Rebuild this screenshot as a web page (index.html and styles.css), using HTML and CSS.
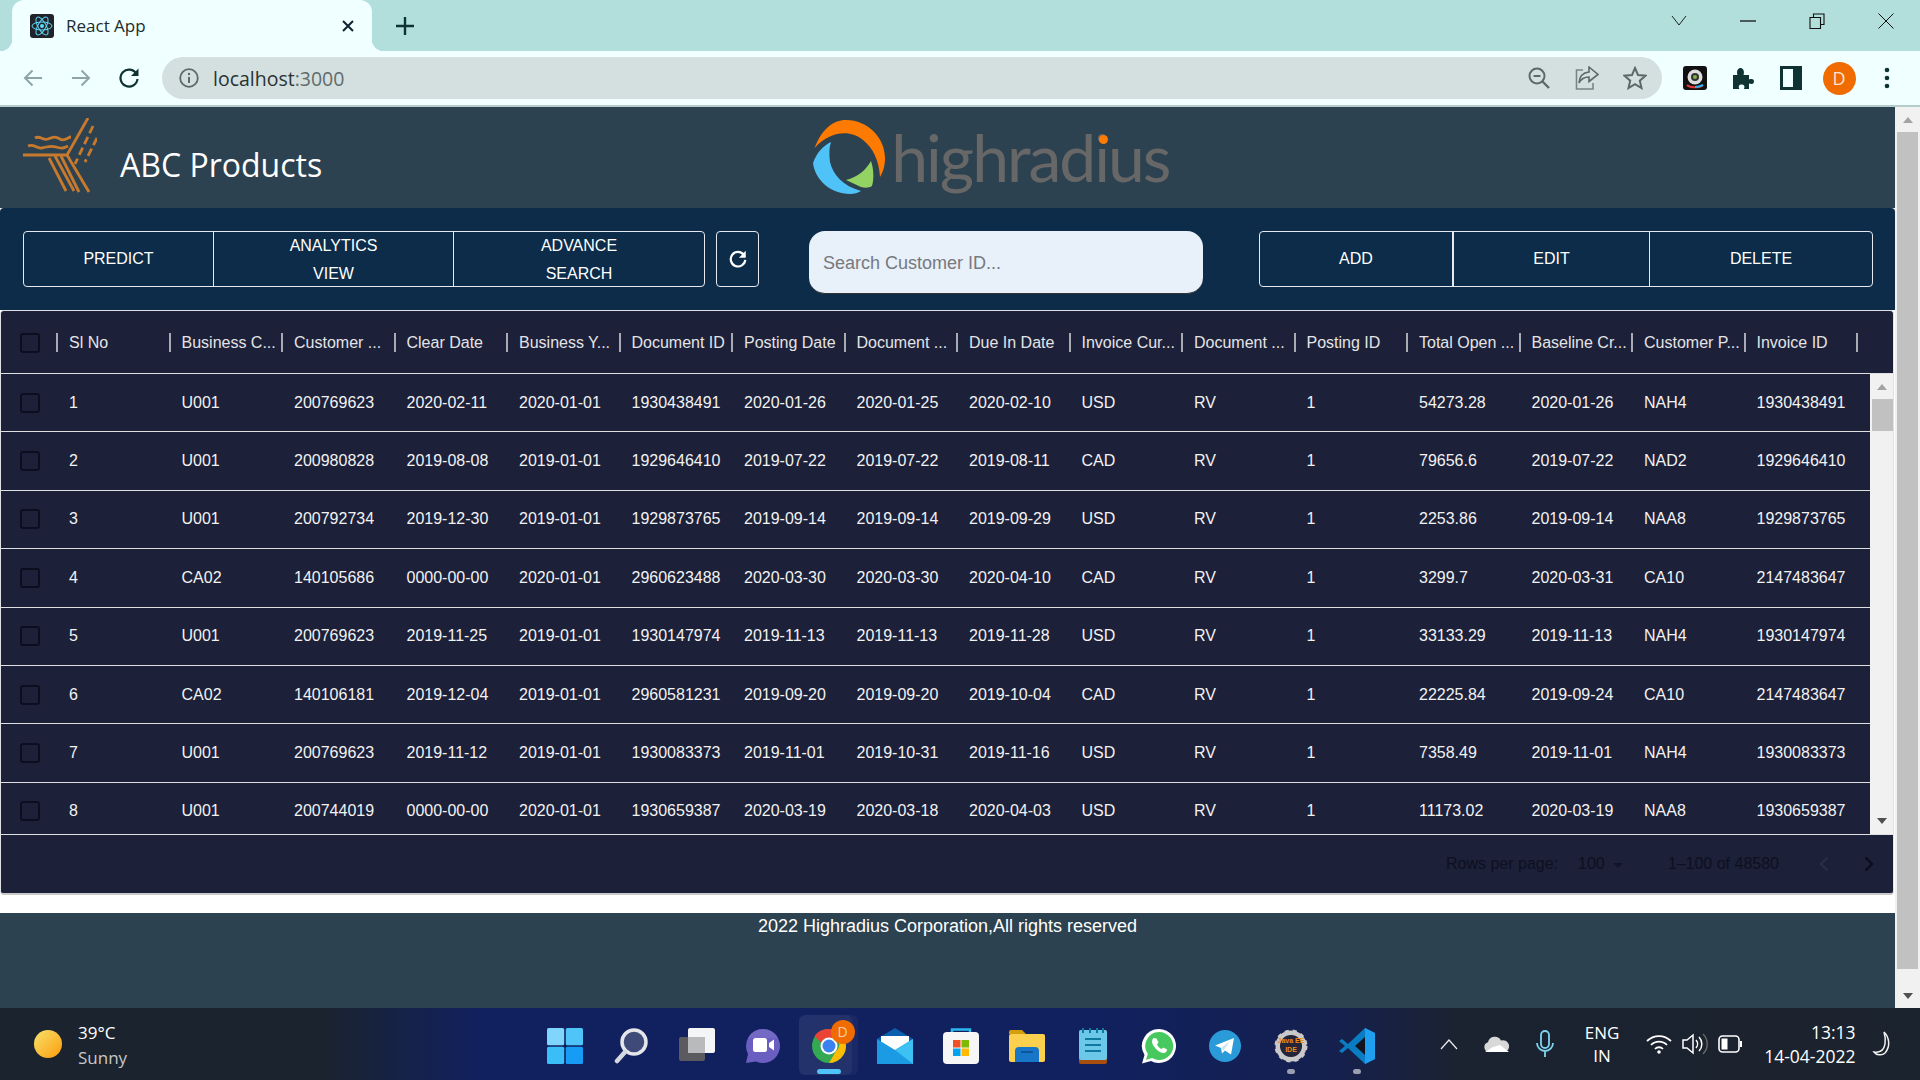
FILE: index.html
```html
<!DOCTYPE html>
<html lang="en">
<head>
  <meta charset="UTF-8">
  <title>React App</title>
  <link rel="stylesheet" href="styles.css">
</head>
<body>
  <!-- Browser tab strip -->
  <div class="tabstrip">
    <div class="tab">
      <svg class="favicon" viewBox="0 0 24 24" width="24" height="24">
        <rect width="24" height="24" rx="3" fill="#20232a"/>
        <g fill="none" stroke="#61dafb" stroke-width="1">
          <ellipse cx="12" cy="12" rx="10" ry="4"/>
          <ellipse cx="12" cy="12" rx="10" ry="4" transform="rotate(60 12 12)"/>
          <ellipse cx="12" cy="12" rx="10" ry="4" transform="rotate(120 12 12)"/>
        </g>
        <circle cx="12" cy="12" r="2" fill="#61dafb"/>
      </svg>
      <span class="tab-title">React App</span>
      <svg class="tab-close" viewBox="0 0 14 14" width="14" height="14"><path d="M2 2l10 10M12 2L2 12" stroke="#123" stroke-width="2"/></svg>
    </div>
    <svg class="new-tab" viewBox="0 0 20 20" width="20" height="20"><path d="M10 1v18M1 10h18" stroke="#0f3333" stroke-width="2.4"/></svg>
    <div class="win-controls">
      <div class="win-btn"><svg viewBox="0 0 16 12" width="16" height="12"><path d="M1 1l7 9 7-9" fill="none" stroke="#222" stroke-width="1"/></svg></div>
      <div class="win-btn"><svg viewBox="0 0 16 4" width="16" height="4"><path d="M0 2h16" stroke="#111" stroke-width="1.3"/></svg></div>
      <div class="win-btn"><svg viewBox="0 0 16 16" width="16" height="16"><path d="M1 4.500h10.500v11H1zM4.500 4.500V1H15v10.500h-3.500" fill="none" stroke="#111" stroke-width="1.1"/></svg></div>
      <div class="win-btn"><svg viewBox="0 0 16 16" width="16" height="16"><path d="M.5.500l15 15M15.500.500l-15 15" stroke="#111" stroke-width="1"/></svg></div>
    </div>
  </div>

  <!-- Browser toolbar -->
  <div class="toolbar">
    <div class="tool-btn"><svg viewBox="0 0 20 20" width="20" height="20"><path d="M19 10H2M9.500 2.500L2 10l7.500 7.500" fill="none" stroke="#8fa5a5" stroke-width="2"/></svg></div>
    <div class="tool-btn"><svg viewBox="0 0 20 20" width="20" height="20"><path d="M1 10h17M10.500 2.500L18 10l-7.500 7.500" fill="none" stroke="#8fa5a5" stroke-width="2"/></svg></div>
    <div class="tool-btn"><svg viewBox="0 0 22 22" width="22" height="22"><path d="M18.500 7A8.500 8.500 0 1 0 19.500 12" fill="none" stroke="#0f3333" stroke-width="2.200"/><path d="M20.500 1.500v7.500H13z" fill="#0f3333"/></svg></div>
    <div class="omnibox">
      <svg class="info-icon" viewBox="0 0 20 20" width="20" height="20"><circle cx="10" cy="10" r="8.800" fill="none" stroke="#5f6868" stroke-width="1.800"/><path d="M10 9v6" stroke="#5f6868" stroke-width="2"/><circle cx="10" cy="6" r="1.200" fill="#5f6868"/></svg>
      <span class="url">localhost<span class="url-port">:3000</span></span>
      <div class="omni-icons">
        <div class="tool-btn"><svg viewBox="0 0 22 22" width="22" height="22"><circle cx="9" cy="9" r="7.500" fill="none" stroke="#5f6868" stroke-width="2"/><path d="M14.500 14.500L21 21" stroke="#5f6868" stroke-width="2.400"/><path d="M5.500 9h7" stroke="#5f6868" stroke-width="2"/></svg></div>
        <div class="tool-btn"><svg viewBox="0 0 24 24" width="24" height="24"><path d="M8 4H1.500v19H18v-6" fill="none" stroke="#7a8585" stroke-width="1.600"/><path d="M14 1l9 7.500-9 7V11c-5 0-8 2-10 6 .5-6 4-10.500 10-11z" fill="none" stroke="#5f6868" stroke-width="1.600"/></svg></div>
        <div class="tool-btn"><svg viewBox="0 0 24 24" width="24" height="24"><path d="M12 2l3 7 7.500.7-5.700 5 1.700 7.300-6.500-3.900L5.500 22l1.700-7.300-5.700-5L9 9z" fill="none" stroke="#5f6868" stroke-width="2"/></svg></div>
      </div>
    </div>
    <div class="ext-icons">
      <div class="tool-btn"><svg viewBox="0 0 24 24" width="24" height="24"><rect width="24" height="24" rx="3" fill="#111"/><circle cx="12" cy="11" r="7.500" fill="#ddd"/><circle cx="12" cy="11" r="4" fill="#333"/><circle cx="12" cy="11" r="2" fill="#7cb342"/><path d="M4 19c3 3 13 3 16 0" fill="none" stroke="#e53935" stroke-width="2"/><path d="M12 21c3 0 6-1 8-2" fill="none" stroke="#29b6f6" stroke-width="2"/></svg></div>
      <div class="tool-btn"><svg viewBox="0 0 22 22" width="22" height="22"><path d="M1 8h4.500C4 3.500 6.500 1 8.500 1s4.500 2.500 3 7H17v4.500c4-1.300 5 .5 5 2s-1 3.300-5 2V22h-5c1.300-3.500-.5-4.500-2.500-4.500S6 18.500 7.300 22H1z" fill="#0f3333"/></svg></div>
      <div class="tool-btn"><svg viewBox="0 0 22 24" width="22" height="24"><path fill-rule="evenodd" d="M0 0h22v24H0zM3 3v18h10V3z" fill="#0f3333"/></svg></div>
      <div class="tool-btn"><span class="avatar">D</span></div>
      <div class="tool-btn"><svg viewBox="0 0 6 24" width="6" height="24"><circle cx="3" cy="4" r="2.300" fill="#0f3333"/><circle cx="3" cy="12" r="2.300" fill="#0f3333"/><circle cx="3" cy="20" r="2.300" fill="#0f3333"/></svg></div>
    </div>
  </div>

  <div class="viewport">
    <div class="page">
      <header class="app-header">
        <svg class="abc-logo" viewBox="0 0 74 76" width="74" height="76">
          <g fill="none" stroke="#c77a2d" stroke-width="2.800">
            <path d="M0 37h44L65 0"/>
            <path d="M26 40l17 33M32 38l19 35M38 38l18 36M44 37l22 37"/>
            <path d="M12 20c5-3 8 3 13 1s7-3 12 0 8-2 11-2M5 28c6-3 8 3 14 2s8-3 14-1 8 1 12-1"/>
            <path d="M70 8L52 46M74 20L62 44" stroke-dasharray="8 4"/>
          </g>
        </svg>
        <h1 class="app-title">ABC Products</h1>
        <div class="hr-logo">
          <svg viewBox="0 0 72 74" width="72" height="74">
            <path d="M1.700 28C8 10 20 0 33 0c22 0 39 18 39 38 0 8-2 14-5 19-1-17-7-29-17-37C38 10 18 10 1.700 28z" fill="#ff7a00"/>
            <path d="M18 22C10 26 4 32 0 43c2 17 18 31 37 31 4 0 8-1 11-3-18-5-28-16-31-29-1-8-1-14 1-20z" fill="#4fc3f7"/>
            <path d="M33 60c12-3 20-10 25-19 3 9 3 19 1 25-3 2-7 2-11 1z" fill="#93d364"/>
          </svg>
          <span class="hr-name">highradius<span class="hr-dot"></span></span>
        </div>
      </header>

      <section class="actions">
        <div class="btn-group group-left">
          <button class="btn btn-predict">PREDICT</button>
          <button class="btn btn-analytics">ANALYTICS VIEW</button>
          <button class="btn btn-advance">ADVANCE SEARCH</button>
        </div>
        <button class="btn-refresh"><svg viewBox="0 0 22 22" width="20" height="20"><path d="M17.500 6.500A8 8 0 1 0 19 12" fill="none" stroke="#fff" stroke-width="2.400"/><path d="M19.500 2v7.500H12z" fill="#fff"/></svg></button>
        <input class="search" type="text" placeholder="Search Customer ID...">
        <div class="btn-group group-right">
          <button class="btn btn-add">ADD</button>
          <button class="btn btn-edit">EDIT</button>
          <button class="btn btn-delete">DELETE</button>
        </div>
      </section>

      <div class="card">
        <div class="grid-row head-row">
          <div class="check-cell"><span class="check"></span></div>
          <div class="hcell">Sl No</div><div class="hcell">Business C...</div><div class="hcell">Customer ...</div><div class="hcell">Clear Date</div><div class="hcell">Business Y...</div><div class="hcell">Document ID</div><div class="hcell">Posting Date</div><div class="hcell">Document ...</div><div class="hcell">Due In Date</div><div class="hcell">Invoice Cur...</div><div class="hcell">Document ...</div><div class="hcell">Posting ID</div><div class="hcell">Total Open ...</div><div class="hcell">Baseline Cr...</div><div class="hcell">Customer P...</div><div class="hcell">Invoice ID</div><div class="hcell"></div>
        </div>
        <div class="grid-body">
          <div class="rows">
            <div class="grid-row"><div class="check-cell"><span class="check"></span></div><div class="cell">1</div><div class="cell">U001</div><div class="cell">200769623</div><div class="cell">2020-02-11</div><div class="cell">2020-01-01</div><div class="cell">1930438491</div><div class="cell">2020-01-26</div><div class="cell">2020-01-25</div><div class="cell">2020-02-10</div><div class="cell">USD</div><div class="cell">RV</div><div class="cell">1</div><div class="cell">54273.28</div><div class="cell">2020-01-26</div><div class="cell">NAH4</div><div class="cell">1930438491</div></div>
            <div class="grid-row"><div class="check-cell"><span class="check"></span></div><div class="cell">2</div><div class="cell">U001</div><div class="cell">200980828</div><div class="cell">2019-08-08</div><div class="cell">2019-01-01</div><div class="cell">1929646410</div><div class="cell">2019-07-22</div><div class="cell">2019-07-22</div><div class="cell">2019-08-11</div><div class="cell">CAD</div><div class="cell">RV</div><div class="cell">1</div><div class="cell">79656.6</div><div class="cell">2019-07-22</div><div class="cell">NAD2</div><div class="cell">1929646410</div></div>
            <div class="grid-row"><div class="check-cell"><span class="check"></span></div><div class="cell">3</div><div class="cell">U001</div><div class="cell">200792734</div><div class="cell">2019-12-30</div><div class="cell">2019-01-01</div><div class="cell">1929873765</div><div class="cell">2019-09-14</div><div class="cell">2019-09-14</div><div class="cell">2019-09-29</div><div class="cell">USD</div><div class="cell">RV</div><div class="cell">1</div><div class="cell">2253.86</div><div class="cell">2019-09-14</div><div class="cell">NAA8</div><div class="cell">1929873765</div></div>
            <div class="grid-row"><div class="check-cell"><span class="check"></span></div><div class="cell">4</div><div class="cell">CA02</div><div class="cell">140105686</div><div class="cell">0000-00-00</div><div class="cell">2020-01-01</div><div class="cell">2960623488</div><div class="cell">2020-03-30</div><div class="cell">2020-03-30</div><div class="cell">2020-04-10</div><div class="cell">CAD</div><div class="cell">RV</div><div class="cell">1</div><div class="cell">3299.7</div><div class="cell">2020-03-31</div><div class="cell">CA10</div><div class="cell">2147483647</div></div>
            <div class="grid-row"><div class="check-cell"><span class="check"></span></div><div class="cell">5</div><div class="cell">U001</div><div class="cell">200769623</div><div class="cell">2019-11-25</div><div class="cell">2019-01-01</div><div class="cell">1930147974</div><div class="cell">2019-11-13</div><div class="cell">2019-11-13</div><div class="cell">2019-11-28</div><div class="cell">USD</div><div class="cell">RV</div><div class="cell">1</div><div class="cell">33133.29</div><div class="cell">2019-11-13</div><div class="cell">NAH4</div><div class="cell">1930147974</div></div>
            <div class="grid-row"><div class="check-cell"><span class="check"></span></div><div class="cell">6</div><div class="cell">CA02</div><div class="cell">140106181</div><div class="cell">2019-12-04</div><div class="cell">2019-01-01</div><div class="cell">2960581231</div><div class="cell">2019-09-20</div><div class="cell">2019-09-20</div><div class="cell">2019-10-04</div><div class="cell">CAD</div><div class="cell">RV</div><div class="cell">1</div><div class="cell">22225.84</div><div class="cell">2019-09-24</div><div class="cell">CA10</div><div class="cell">2147483647</div></div>
            <div class="grid-row"><div class="check-cell"><span class="check"></span></div><div class="cell">7</div><div class="cell">U001</div><div class="cell">200769623</div><div class="cell">2019-11-12</div><div class="cell">2019-01-01</div><div class="cell">1930083373</div><div class="cell">2019-11-01</div><div class="cell">2019-10-31</div><div class="cell">2019-11-16</div><div class="cell">USD</div><div class="cell">RV</div><div class="cell">1</div><div class="cell">7358.49</div><div class="cell">2019-11-01</div><div class="cell">NAH4</div><div class="cell">1930083373</div></div>
            <div class="grid-row"><div class="check-cell"><span class="check"></span></div><div class="cell">8</div><div class="cell">U001</div><div class="cell">200744019</div><div class="cell">0000-00-00</div><div class="cell">2020-01-01</div><div class="cell">1930659387</div><div class="cell">2020-03-19</div><div class="cell">2020-03-18</div><div class="cell">2020-04-03</div><div class="cell">USD</div><div class="cell">RV</div><div class="cell">1</div><div class="cell">11173.02</div><div class="cell">2020-03-19</div><div class="cell">NAA8</div><div class="cell">1930659387</div></div>
          </div>
          <div class="inner-scroll">
            <span class="arrow-up"></span>
            <span class="inner-thumb"></span>
            <span class="arrow-down"></span>
          </div>
        </div>
        <div class="pagination">
          <span class="rows-label">Rows per page:</span>
          <span class="rows-value">100</span>
          <span class="rows-caret"></span>
          <span class="rows-range">1–100 of 48580</span>
          <svg class="page-prev" viewBox="0 0 10 16" width="10" height="16"><path d="M8.500 1.500L2 8l6.500 6.500" fill="none" stroke="#2a2e48" stroke-width="2.200"/></svg>
          <svg class="page-next" viewBox="0 0 10 16" width="10" height="16"><path d="M1.500 1.500L8 8l-6.500 6.500" fill="none" stroke="#0b0d1a" stroke-width="2.200"/></svg>
        </div>
      </div>

      <footer class="app-footer">2022 Highradius Corporation,All rights reserved</footer>
    </div>

    <div class="page-scroll">
      <div class="scroll-end"><span class="arrow-up"></span></div>
      <div class="scroll-track"><span class="scroll-thumb"></span></div>
      <div class="scroll-end"><span class="arrow-down"></span></div>
    </div>
  </div>

  <!-- Windows taskbar -->
  <div class="taskbar">
    <div class="weather">
      <span class="sun"></span>
      <div class="weather-text">
        <div class="temp">39°C</div>
        <div class="sky">Sunny</div>
      </div>
    </div>
    <div class="tb-apps">
      <div class="tb-app"><svg viewBox="0 0 36 36" width="36" height="36"><rect width="17.200" height="17.200" rx="1.500" fill="#7fd5fb"/><rect x="18.800" width="17.200" height="17.200" rx="1.500" fill="#4fc4f9"/><rect y="18.800" width="17.200" height="17.200" rx="1.500" fill="#3bbdf8"/><rect x="18.800" y="18.800" width="17.200" height="17.200" rx="1.500" fill="#169cf5"/></svg></div>
      <div class="tb-app"><svg viewBox="0 0 34 36" width="34" height="36"><circle cx="20" cy="14" r="12" fill="#3f4a78" stroke="#e4e6ea" stroke-width="3.500"/><path d="M11 24l-8 9" stroke="#d5d8dd" stroke-width="4.500" stroke-linecap="round"/></svg></div>
      <div class="tb-app"><svg viewBox="0 0 36 36" width="36" height="36"><rect y="9" width="26" height="24" rx="2" fill="#5b5b5f"/><rect x="9" width="27" height="25" rx="2" fill="#f4f5f6"/><rect x="9" y="9" width="17" height="16" fill="#b9babc"/></svg></div>
      <div class="tb-app"><svg viewBox="0 0 36 36" width="36" height="36"><path d="M18 1a17 17 0 1 1-7 32.500L1 35l2-9A17 17 0 0 1 18 1z" fill="#6a5fc1"/><path d="M18 1a17 17 0 0 0-15 9h30A17 17 0 0 0 18 1z" fill="#7b6fc7" opacity=".6"/><rect x="8" y="10" width="14" height="14" rx="2.500" fill="#fff"/><path d="M24 15l5-3.500v11L24 19z" fill="#fff"/></svg></div>
      <div class="tb-app tb-active">
        <svg viewBox="0 3 42 42" width="42" height="42"><circle cx="21" cy="24" r="17" fill="#34a853"/><path d="M21 7a17 17 0 0 1 15 9H21a8 8 0 0 0-7.500 5L6.500 14A17 17 0 0 1 21 7z" fill="#ea4335"/><path d="M36 16a17 17 0 0 1-15 25l7-12a8 8 0 0 0 0-13z" fill="#fbbc05"/><circle cx="21" cy="24" r="8.500" fill="#fff"/><circle cx="21" cy="24" r="6.500" fill="#3b82f0"/></svg>
        <span class="tb-badge">D</span>
        <span class="tb-indicator"></span>
      </div>
      <div class="tb-app"><svg viewBox="0 0 36 36" width="36" height="36"><path d="M0 11L18 0l18 11v6H0z" fill="#0a5fae"/><path d="M4 8h28v14H4z" fill="#fff"/><path d="M0 11l18 11 18-11v25H0z" fill="#1a9be3"/><path d="M36 11v25L18 22z" fill="#3dc0f2"/></svg></div>
      <div class="tb-app"><svg viewBox="0 0 36 36" width="36" height="36"><path d="M9 6V1.500h18V6" fill="none" stroke="#28b8ec" stroke-width="2.500"/><rect y="4" width="36" height="32" rx="4" fill="#f6f6f6"/><rect x="10" y="12" width="7.500" height="7.500" fill="#f25022"/><rect x="18.500" y="12" width="7.500" height="7.500" fill="#7fba00"/><rect x="10" y="20.500" width="7.500" height="7.500" fill="#00a4ef"/><rect x="18.500" y="20.500" width="7.500" height="7.500" fill="#ffb900"/></svg></div>
      <div class="tb-app"><svg viewBox="0 0 36 34" width="36" height="34"><path d="M0 3a2 2 0 0 1 2-2h11l4 4h-17z" fill="#d69e0d"/><rect y="5" width="36" height="28" rx="2" fill="#fcd04f"/><path d="M6 33V22a4 4 0 0 1 4-4h16a4 4 0 0 1 4 4v11z" fill="#1776c8"/><path d="M12 23h12" stroke="#0b4f8f" stroke-width="1.600"/></svg></div>
      <div class="tb-app"><svg viewBox="0 0 28 36" width="28" height="36"><rect y="2" width="28" height="34" rx="2" fill="#a84f0e"/><rect y="2" width="28" height="30" rx="2" fill="#6cc8e8"/><path d="M6 11h16M6 17h16M6 23h16" stroke="#0f7aa0" stroke-width="2"/><path d="M4 0v5M11 0v5M18 0v5M24 0v5" stroke="#0f7aa0" stroke-width="2"/></svg></div>
      <div class="tb-app"><svg viewBox="0 0 36 36" width="36" height="36"><path d="M18 1a17 17 0 1 1-8 32L1 35.500 3.500 27A17 17 0 0 1 18 1z" fill="#fff"/><path d="M18 4a14 14 0 1 1-7 26l-6 2 1.800-6A14 14 0 0 1 18 4z" fill="#48c95f"/><path d="M12.500 10c-2 2-2 5 .5 8.500s6 6.500 9.500 6.500c2 0 4-2 3.500-3.500l-3.500-2-2 1.500c-2-1-3.500-2.500-4.500-4.500l1.500-2-2-4z" fill="#fff"/></svg></div>
      <div class="tb-app"><svg viewBox="0 0 32 32" width="32" height="32"><circle cx="16" cy="16" r="16" fill="#2a9bd8"/><path d="M6 15.500L25 8l-3 16.500-6-4-3 3-1-5.500z" fill="#fff"/><path d="M12 18l9-7-6.500 9.500z" fill="#c8e3f3"/></svg></div>
      <div class="tb-app tb-open">
        <svg viewBox="0 0 34 34" width="34" height="34"><circle cx="17" cy="17" r="13" fill="none" stroke="#c9c9c9" stroke-width="5"/><circle cx="17" cy="17" r="15" fill="none" stroke="#c9c9c9" stroke-width="3" stroke-dasharray="4 4"/><circle cx="17" cy="17" r="11" fill="#24243a"/><text x="17" y="14" class="java-text">Java EE</text><text x="17" y="23" class="java-text">IDE</text></svg>
        <span class="tb-dot"></span>
      </div>
      <div class="tb-app tb-open">
        <svg viewBox="0 0 36 36" width="36" height="36"><path d="M26 0l10 5v26l-10 5L9 20l-6 5-3-2 6-5-6-5 3-2 6 5z" fill="#0a7cc4"/><path d="M26 0l10 5v26l-10 5z" fill="#1f9ff0"/><path d="M26 9l-10 9 10 9z" fill="#12151f"/></svg>
        <span class="tb-dot"></span>
      </div>
    </div>
    <div class="tray">
      <div class="tray-item wide"><svg viewBox="0 0 18 12" width="18" height="12"><path d="M1 11l8-9 8 9" fill="none" stroke="#eee" stroke-width="1.200"/></svg></div>
      <div class="tray-item wide"><svg viewBox="0 0 26 18" width="26" height="18"><path d="M5 17a5 5 0 0 1-1-9.800A7 7 0 0 1 17 5.500 5.500 5.500 0 0 1 21 17z" fill="#d8d8d8"/><path d="M1 17l8-5 7-2 9 7z" fill="#fff"/></svg></div>
      <div class="tray-item wide"><svg viewBox="0 0 18 28" width="18" height="28"><rect x="5" y="1" width="8" height="17" rx="4" fill="none" stroke="#7fd4ef" stroke-width="1.800"/><path d="M1 13a8 8 0 0 0 16 0M9 21v6" fill="none" stroke="#7fd4ef" stroke-width="1.800"/></svg></div>
      <div class="tray-lang"><div>ENG</div><div>IN</div></div>
      <div class="tray-item wifi"><svg viewBox="0 0 26 20" width="26" height="20"><path d="M1 7a17 17 0 0 1 24 0M5 11a11 11 0 0 1 16 0M9 15a5.500 5.500 0 0 1 8 0" fill="none" stroke="#fff" stroke-width="1.800"/><circle cx="13" cy="18" r="1.800" fill="#fff"/></svg></div>
      <div class="tray-item vol"><svg viewBox="0 0 26 22" width="26" height="22"><path d="M1 7h4l6-5v18l-6-5H1z" fill="none" stroke="#fff" stroke-width="1.500"/><path d="M14 7a6 6 0 0 1 0 8M17 4a10 10 0 0 1 0 14" fill="none" stroke="#fff" stroke-width="1.500"/><path d="M21 1a14 14 0 0 1 0 20" fill="none" stroke="#666" stroke-width="1.500"/></svg></div>
      <div class="tray-item batt"><svg viewBox="0 0 24 18" width="24" height="18"><rect x="1" y="1" width="20" height="16" rx="3.500" fill="none" stroke="#fff" stroke-width="1.600"/><rect x="3.500" y="3.500" width="6" height="11" fill="#fff"/><rect x="22" y="6" width="2" height="6" fill="#fff"/></svg></div>
      <div class="clock"><div>13:13</div><div>14-04-2022</div></div>
      <div class="tray-item moon"><svg viewBox="0 0 20 26" width="20" height="26"><path d="M12 1c5 5 7 14 1 21-3 3-9 2-11-1 6 1 10-2 11-8 .5-4 0-9-1-12z" fill="none" stroke="#f1f1f1" stroke-width="1.500"/></svg></div>
    </div>
  </div>
</body>
</html>
```

FILE: styles.css
```css
* {
  box-sizing: border-box;
}

body {
  margin: 0;
  width: 1920px;
  height: 1080px;
  overflow: hidden;
  font-family: "Liberation Sans", Arial, sans-serif;
  background-color: #fff;
}

/* Tab strip */
.tabstrip {
  display: flex;
  align-items: center;
  height: 51px;
  padding-left: 12px;
  background-color: #b2dfdc;
}

.tab {
  display: flex;
  align-items: center;
  position: relative;
  width: 360px;
  height: 51px;
  padding-left: 18px;
  background-color: #f0ffff;
  border-radius: 12px 12px 0 0;
}

.tab::before,
.tab::after {
  content: "";
  position: absolute;
  bottom: 0;
  width: 12px;
  height: 12px;
}

.tab::before {
  left: -12px;
  background: radial-gradient(circle at 0 0, #b2dfdc 12px, #f0ffff 12.5px);
}

.tab::after {
  right: -12px;
  background: radial-gradient(circle at 100% 0, #b2dfdc 12px, #f0ffff 12.5px);
}

.tab-title {
  margin-left: 12px;
  font-family: "Open Sans", sans-serif;
  font-size: 17px;
  color: #1c2b2b;
}

.tab-close {
  margin-left: auto;
  margin-right: 17px;
}

.new-tab {
  margin-left: 23px;
}

.win-controls {
  display: flex;
  margin-left: auto;
  align-self: flex-start;
}

.win-btn {
  display: flex;
  align-items: center;
  justify-content: center;
  width: 69px;
  height: 42px;
}

/* Toolbar */
.toolbar {
  display: flex;
  align-items: center;
  height: 56px;
  padding-left: 9px;
  background-color: #f0ffff;
  border-bottom: 2px solid #b5cdca;
}

.tool-btn {
  display: flex;
  align-items: center;
  justify-content: center;
  width: 48px;
  height: 42px;
  flex: none;
}

.omnibox {
  display: flex;
  align-items: center;
  width: 1500px;
  height: 42px;
  margin-left: 9px;
  padding-left: 17px;
  background-color: #d4e0e0;
  border-radius: 21px;
}

.url {
  margin-left: 14px;
  font-family: "Open Sans", sans-serif;
  font-size: 19.5px;
  color: #2b3232;
}

.url-port {
  color: #626b6b;
}

.omni-icons {
  display: flex;
  margin-left: auto;
  padding-right: 3px;
}

.ext-icons {
  display: flex;
  margin-left: 9px;
}

.avatar {
  display: flex;
  align-items: center;
  justify-content: center;
  width: 33px;
  height: 33px;
  border-radius: 50%;
  background-color: #f06c00;
  color: #f7e4d4;
  font-family: "Open Sans", sans-serif;
  font-size: 18px;
}

/* Page */
.viewport {
  display: flex;
  height: 901px;
}

.page {
  width: 1895px;
  background-color: #fff;
}

.app-header {
  display: flex;
  align-items: center;
  position: relative;
  height: 101px;
  padding-left: 23px;
  background-color: #2d4250;
}

.abc-logo {
  flex: none;
  margin-top: -4px;
}

.app-title {
  margin: 14px 0 0 23px;
  font-family: "Open Sans", sans-serif;
  font-size: 32px;
  font-weight: 400;
  color: #fff;
}

.hr-logo {
  display: flex;
  align-items: flex-start;
  margin-left: 491px;
  margin-top: 15px;
  height: 90px;
}

.hr-name {
  position: relative;
  margin-left: 6px;
  margin-top: -6.500px;
  font-family: Lato, sans-serif;
  font-size: 66px;
  line-height: 86px;
  letter-spacing: -2px;
  color: #676767;
}

.hr-dot {
  position: absolute;
  right: 61px;
  top: 21px;
  width: 9px;
  height: 9px;
  border-radius: 50%;
  background-color: #ff7a00;
}

.actions {
  display: flex;
  align-items: flex-start;
  height: 102px;
  padding: 23px 0 0 23px;
  background-color: #0c2c49;
  border-radius: 4px 4px 0 0;
}

.btn-group {
  display: flex;
  height: 56px;
  border: 1px solid #e6e9ee;
  border-radius: 4px;
}

.group-left {
  width: 682px;
}

.group-right {
  width: 614px;
  margin-left: 56px;
}

.btn {
  padding: 0 30px 1px;
  background: none;
  color: #fff;
  border: none;
  border-right: 1px solid #e6e9ee;
  font-family: inherit;
  font-size: 16px;
  line-height: 28px;
  cursor: pointer;
}

.btn:last-child {
  border-right: none;
}

.btn-predict { width: 190px; }
.btn-analytics { width: 240px; padding: 0 70px 3px; }
.btn-advance { flex: 1; padding: 0 60px 3px; }
.btn-add { width: 194px; border-right-width: 2px; }
.btn-edit { width: 196px; }
.btn-delete { flex: 1; }

.btn-refresh {
  display: flex;
  align-items: center;
  justify-content: center;
  width: 43px;
  height: 56px;
  margin-left: 11px;
  padding: 0;
  background: none;
  border: 1px solid #e6e9ee;
  border-radius: 4px;
}

.search {
  width: 394px;
  height: 63px;
  margin-left: 50px;
  padding: 2px 14px 0;
  background-color: #e8f0f9;
  border: none;
  border-bottom: 1px solid #333;
  border-radius: 16px;
  font-family: inherit;
  font-size: 18px;
}

.search::placeholder {
  color: #76797e;
}

/* Data grid */
.card {
  width: 1894px;
  height: 585px;
  background-color: #1c2039;
  border: 1px solid #dfe1e6;
  border-bottom: 2px solid #c9c9c9;
  border-radius: 4px;
  color: #f2f2f2;
  font-size: 16px;
}

.grid-row {
  display: grid;
  grid-template-columns: 55px repeat(17, 112.500px);
  align-items: center;
  height: 58.400px;
  border-bottom: 1px solid #e0e0e0;
}

.head-row {
  height: 63px;
  padding-top: 1px;
  color: #e4e4e6;
}

.check-cell {
  display: flex;
  padding-left: 19px;
}

.check {
  width: 20px;
  height: 20px;
  border: 2px solid #0c0e20;
  border-radius: 3px;
}

.hcell {
  display: flex;
  align-items: center;
  white-space: nowrap;
  overflow: hidden;
}

.hcell::before {
  content: "";
  flex: none;
  width: 2px;
  height: 19px;
  margin-right: 11px;
  background-color: #a9abb4;
}

.cell {
  padding-left: 13px;
  white-space: nowrap;
}

.grid-body {
  display: flex;
  height: 461px;
  border-bottom: 1px solid #e0e0e0;
}

.rows {
  width: 1869px;
  overflow: hidden;
}

.rows .grid-row {
  width: 1869px;
}

.inner-scroll {
  display: flex;
  flex-direction: column;
  align-items: center;
  flex: 1;
  background-color: #f1f1f1;
}

.inner-thumb {
  width: 21px;
  height: 32px;
  margin-top: 9px;
  margin-left: 2px;
  background-color: #c1c1c1;
}

.inner-scroll .arrow-up {
  margin-top: 10px;
}

.inner-scroll .arrow-down {
  margin-top: auto;
  margin-bottom: 10px;
}

.arrow-up,
.arrow-down {
  display: block;
  width: 0;
  height: 0;
  border-left: 5.500px solid transparent;
  border-right: 5.500px solid transparent;
}

.arrow-up {
  border-bottom: 6px solid #a3a3a3;
}

.arrow-down {
  border-top: 6px solid #505050;
}

.pagination {
  display: flex;
  align-items: center;
  height: 57px;
  padding-left: 1445px;
  color: #0d1020;
}

.rows-value {
  margin-left: 20px;
}

.rows-caret {
  width: 0;
  height: 0;
  margin: 3px 0 0 8px;
  border-left: 5px solid transparent;
  border-right: 5px solid transparent;
  border-top: 5px solid #10132a;
}

.rows-range {
  margin-left: 45px;
}

.page-prev {
  margin-left: 40px;
}

.page-next {
  margin-left: 35px;
}

.app-footer {
  height: 95px;
  margin-top: 18px;
  padding-top: 3px;
  background-color: #2d4250;
  color: #fff;
  font-size: 18px;
  line-height: 21px;
  text-align: center;
}

/* Page scrollbar */
.page-scroll {
  display: flex;
  flex-direction: column;
  width: 25px;
  background-color: #f1f1f1;
}

.scroll-end {
  display: flex;
  align-items: center;
  justify-content: center;
  height: 25px;
  flex: none;
}

.scroll-track {
  flex: 1;
}

.scroll-thumb {
  display: block;
  width: 21px;
  height: 837px;
  margin-left: 2px;
  background-color: #c1c1c1;
}

/* Taskbar */
.taskbar {
  display: flex;
  height: 72px;
  background: linear-gradient(90deg, #1b232e 0, #1b232e 320px, #11215f 480px, #11215f 1100px, #15204f 1330px, #1b2230 1460px, #1b232e 100%);
  color: #fff;
  font-family: "Open Sans", sans-serif;
}

.weather {
  display: flex;
  align-items: center;
  width: 531.500px;
  padding-left: 34px;
  flex: none;
}

.sun {
  width: 28px;
  height: 28px;
  border-radius: 50%;
  background: linear-gradient(135deg, #f7e26b, #fd9c0c);
}

.weather-text {
  margin-left: 16px;
  padding-top: 2px;
  font-size: 17px;
  line-height: 25px;
}

.sky {
  color: #c8c8c8;
}

.tb-apps {
  display: flex;
  flex: none;
}

.tb-app {
  display: flex;
  align-items: center;
  justify-content: center;
  position: relative;
  width: 66px;
  height: 72px;
  padding-top: 3px;
}

.tb-active::before {
  content: "";
  position: absolute;
  left: 3px;
  right: 10px;
  top: 7px;
  bottom: 5px;
  background-color: rgba(255, 255, 255, 0.08);
  border-radius: 6px;
  box-shadow: 6px 0 0 rgba(255, 255, 255, 0.04);
}

.tb-active svg {
  position: relative;
}

.tb-badge {
  position: absolute;
  left: 35px;
  top: 12px;
  width: 24px;
  height: 24px;
  border-radius: 50%;
  background-color: #f06c00;
  color: #f7d0a8;
  font-size: 14px;
  line-height: 24px;
  text-align: center;
}

.tb-indicator {
  position: absolute;
  left: 21px;
  bottom: 6px;
  width: 24px;
  height: 5px;
  border-radius: 3px;
  background-color: #4fc3f7;
}

.tb-dot {
  position: absolute;
  left: 29px;
  bottom: 6px;
  width: 8px;
  height: 5px;
  border-radius: 3px;
  background-color: #9a9fb0;
}

.java-text {
  fill: #f08a12;
  font-family: "Liberation Sans", sans-serif;
  font-size: 7px;
  font-weight: 700;
  text-anchor: middle;
}

.tray {
  display: flex;
  align-items: center;
  flex: 1;
  padding-left: 35.500px;
}

.tray-item {
  display: flex;
  align-items: center;
  justify-content: center;
  flex: none;
}

.wide { width: 48px; }
.wifi { width: 38px; margin-left: 5px; }
.vol { width: 34px; }
.batt { width: 36px; }
.moon { width: 50px; margin-left: 1px; }

.tray-lang {
  width: 66px;
  font-size: 17px;
  line-height: 23px;
  text-align: center;
}

.clock {
  width: 107.500px;
  font-size: 17.500px;
  line-height: 24px;
  text-align: right;
}
```
